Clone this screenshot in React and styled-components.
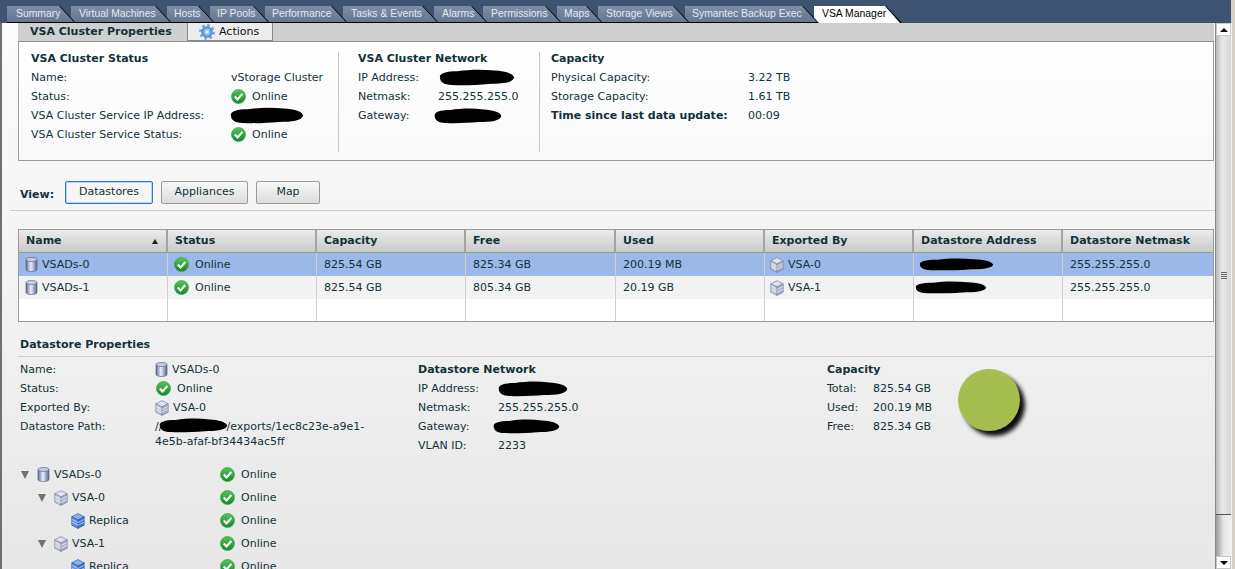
import React from "react";
import styled, { createGlobalStyle } from "styled-components";

const Global = createGlobalStyle`
  html, body { margin: 0; padding: 0; background: #d4d0c8; }
  body { font-family: "DejaVu Sans", Verdana, sans-serif; font-size: 11px; color: #12323a; }
  * { box-sizing: border-box; }
`;

const Page = styled.div`
  width: 1235px; height: 569px; overflow: hidden; display: flex; flex-direction: column; background: #d4d0c8;
`;
const TabBar = styled.div`
  height: 23px; flex: none; display: flex; align-items: flex-end; padding-left: 7px; background: #3d5370; margin-right: 4px;
`;
const Tab = styled.div`
  position: relative; height: 17px; width: ${p => p.$w + 5}px; margin-right: -5px; z-index: ${p => p.$z};
  padding-left: ${p => p.$pad}px; line-height: 16px; white-space: nowrap;
  font-family: "Liberation Sans", Arial, sans-serif; font-size: 10.4px;
  color: ${p => (p.$active ? "#000" : "#e4e8ee")};
  background: #000;
  clip-path: polygon(0 100%, 0 0, calc(100% - 16px) 0, 100% 100%);
  &::before {
    content: ""; position: absolute; inset: 0 0 ${p => (p.$active ? 0 : 1)}px 0; z-index: -1;
    background: ${p => (p.$active ? "#fff" : "linear-gradient(#7d8da6, #66768f)")};
    clip-path: polygon(0 100%, 0 0, calc(100% - 17px) 0, calc(100% - 2px) 100%);
  }
`;
const Body = styled.div`flex: 1; min-height: 0; display: flex;`;
const Edge = styled.div`width: 2px; flex: none; background: #6f6f6f;`;
const Main = styled.div`
  width: 1213px; flex: none; overflow: hidden; background: linear-gradient(#fafafa, #f6f6f6 32%, #e7e7e7);
`;
const ClusterBox = styled.section`margin: 0 1px 0 16px;`;
const ClusterHeader = styled.div`
  height: 19px; display: flex; background: #cfcfcf; border-bottom: 1px solid #8f8f8f; padding-left: 12px;
`;
const HeaderTitle = styled.h2`
  margin: 0; width: 157px; font-size: 11px; font-weight: 700; line-height: 17px; color: #12323a;
`;
const ActionButton = styled.button`
  width: 86px; height: 18px; padding: 0 0 0 11px; display: flex; align-items: center; gap: 4px; font: inherit; color: #111;
  background: #ececec; border: 1px solid #8a8a8a; border-top: 0; border-left-width: 1px;
`;
const ClusterPanel = styled.div`
  height: 119px; display: flex; padding: 7px 0 0 12px; border: 1px solid #9a9a9a; border-top: 0;
  background: linear-gradient(#fff, #f8f8f8);
`;
const InfoColumn = styled.div`width: ${p => p.$w}px; flex: none;`;
const Divider = styled.div`width: 1px; height: 100px; margin: 3px ${p => p.$gap}px 0 0; background: #c4c8c8; flex: none;`;
const Row = styled.div`
  height: 19px; display: flex; align-items: center; white-space: nowrap;
`;
const Label = styled.span`width: ${p => p.$w}px; flex: none; font-weight: ${p => (p.$bold ? 700 : 400)};`;
const ColTitle = styled.div`height: 19px; line-height: 19px; font-weight: 700; white-space: nowrap;`;
const Value = styled.span`display: inline-flex; align-items: center; gap: ${p => p.$gap ?? 4}px;`;
const Mark = styled.svg`
  display: block; flex: none; width: ${p => p.$w}px; height: ${p => p.$h}px; margin-left: ${p => p.$x ?? 0}px;
`;
const InlineMark = styled(Mark)`display: inline-block; vertical-align: middle; margin: -4px 0 0 -4px;`;

const ViewRow = styled.div`
  margin-top: 20px; height: 30px; padding: 0 0 7px 18px; display: flex; align-items: flex-start; border-bottom: 1px solid #c9d0cd; margin-left: 8px; padding-left: 10px;
`;
const ViewLabel = styled.span`width: 45px; font-weight: 700; line-height: 27px;`;
const ViewButton = styled.button`
  width: ${p => p.$w}px; height: 23px; margin-right: 8px; padding: 0 0 2px; font: inherit; color: #12323a; border-radius: 2px;
  background: linear-gradient(#f8f8f8, #dcdcdc);
  border: 1px solid ${p => (p.$on ? "#2f73d8" : "#9a9a9a")};
  box-shadow: ${p => (p.$on ? "inset 0 0 0 1px #b9d2f5" : "none")};
  ${p => (p.$on ? "background: #f6f6f6;" : "")}
`;

const Table = styled.div`
  margin: 18px 1px 0 16px; width: 1196px; border: 1px solid #9a9a9a; border-top-width: 1px; background: #fff;
`;
const GridRow = styled.div`
  display: grid; grid-template-columns: 149px 149px 149px 150px 149px 149px 149px 150px;
  height: ${p => p.$h ?? 23}px; background: ${p => p.$bg};
  ${p => (p.$head ? "border-bottom: 1px solid #9a9a9a;" : "")}
`;
const HeadCell = styled.div`
  padding-left: 7px; line-height: 21px; font-weight: 700; color: #12323a; border-right: 2px solid #a4a4a4; position: relative;
  background: linear-gradient(#ebebeb, #c9c9c9);
  &:last-child { border-right: 0; }
`;
const SortArrow = styled.span`
  position: absolute; right: 8px; top: 9px; width: 0; height: 0;
  border: 3px solid transparent; border-top: 0; border-bottom: 5px solid #222;
`;
const Cell = styled.div`
  display: flex; align-items: center; gap: ${p => p.$gap ?? 4}px; padding-left: ${p => p.$pad ?? 7}px; white-space: nowrap; border-right: 1px solid #cfcfcf; color: ${p => p.$c ?? "#12323a"};
  &:last-child { border-right: 0; }
`;

const DetailTitle = styled.h3`
  margin: 14px 1px 0 16px; padding: 0 0 4px 2px; height: 21px; font-size: 11px; line-height: 17px; font-weight: 700; color: #12323a; border-bottom: 1px solid #d0d0d0;
`;
const Details = styled.div`display: flex; height: 106px; padding: 3px 0 0 18px;`;
const DetailCol = styled.div`width: ${p => p.$w}px; flex: none;`;
const PathRow = styled.div`display: flex; line-height: 15px; padding-top: 2px;`;
const PathText = styled.div`width: 235px;`;
const Gauge = styled.div`
  width: 62px; height: 62px; margin-top: 9px; border-radius: 50%; background: #a6bd50; box-shadow: 5px 5px 4px rgba(0,0,0,.95); flex: none;
`;
const Tree = styled.div`padding-left: 19px;`;
const TreeRow = styled.div`height: 23px; display: flex; align-items: center;`;
const TreeName = styled.div`
  width: 199px; flex: none; display: flex; align-items: center; gap: 4px; padding-left: ${p => p.$i * 17}px;
`;
const Caret = styled.span`
  width: 0; height: 0; flex: none; margin-right: 4px; margin-left: ${p => (p.$hidden ? 0 : 0)}px; border: 4.5px solid transparent; border-bottom: 0; border-top: 8px solid #6a7470; visibility: ${p => (p.$hidden ? "hidden" : "visible")};
`;

const Scroll = styled.div`
  width: 16px; flex: none; display: flex; flex-direction: column; border-left: 1px solid #8a8a8a; background: #e6e6e6;
`;
const ScrollBtn = styled.div`
  height: 13px; flex: none; display: flex; align-items: center; justify-content: center; background: #fff; border: 1px solid #c8c8c8;
`;
const ArrowUp = styled.span`width: 0; height: 0; border: 4px solid transparent; border-top: 0; border-bottom: 4px solid #000;`;
const ArrowDown = styled.span`width: 0; height: 0; border: 4px solid transparent; border-bottom: 0; border-top: 4px solid #000;`;
const Thumb = styled.div`
  flex: 1; display: flex; flex-direction: column; justify-content: center; align-items: center; gap: 1px; border-bottom: 1px solid #555; border-top: 1px solid transparent;
  background: linear-gradient(90deg, #b8b8b8, #e8e8e8 40%, #d8d8d8);
`;
const Grip = styled.span`width: 6px; height: 1px; background: #666;`;
const Track = styled.div`height: 41px; flex: none; background: linear-gradient(90deg, #9a9a9a, #e6e6e6 50%, #f0f0f0);`;
const Side = styled.div`flex: 1; background: #d4d0c8; border-left: 1px solid #f4f2ee;`;

const Check = () => (
  <svg width="15" height="15" viewBox="0 0 15 15" style={{ flex: "none", display: "block" }}>
    <defs>
      <linearGradient id="okg" x1="0" y1="0" x2="0" y2="1">
        <stop offset="0" stopColor="#56c45e" />
        <stop offset="1" stopColor="#15882c" />
      </linearGradient>
    </defs>
    <circle cx="7.5" cy="7.5" r="7" fill="url(#okg)" stroke="#2a9a3e" strokeWidth=".6" />
    <path d="M3.8 7.6l2.7 2.8 4.8-5.4" fill="none" stroke="#fff" strokeWidth="2.1" />
  </svg>
);
const Cyl = () => (
  <svg width="13" height="15" viewBox="0 0 13 15" style={{ flex: "none", display: "block" }}>
    <defs>
      <linearGradient id="cyg" x1="0" y1="0" x2="1" y2="0">
        <stop offset="0" stopColor="#4b5a8c" />
        <stop offset=".35" stopColor="#eef0f6" />
        <stop offset=".65" stopColor="#c3c9da" />
        <stop offset="1" stopColor="#4b5a8c" />
      </linearGradient>
    </defs>
    <path d="M1 2.5v10c0 1 2.4 2 5.5 2s5.5-1 5.5-2v-10z" fill="url(#cyg)" stroke="#59668f" strokeWidth=".7" />
    <ellipse cx="6.5" cy="2.5" rx="5.5" ry="2" fill="#c9cede" stroke="#59668f" strokeWidth=".7" />
    <path d="M4 4.5v9.5M9 4.5v9.5" stroke="#8d97b6" strokeWidth=".7" />
  </svg>
);
const Cube = ({ blue }) => {
  const s = blue ? "#2f5fb5" : "#7a83a6";
  const top = blue ? "#8fb2ea" : "#dfe2ec";
  const l = blue ? "#5f8fdc" : "#c6cadb";
  const r = blue ? "#3f70c8" : "#a9afc8";
  return (
    <svg width="14" height="16" viewBox="0 0 14 16" style={{ flex: "none", display: "block" }}>
      <path d="M7 .6l6.2 3.2L7 7 .8 3.8z" fill={top} stroke={s} strokeWidth=".7" />
      <path d="M.8 3.8L7 7v8.4L.8 12.2z" fill={l} stroke={s} strokeWidth=".7" />
      <path d="M13.2 3.8L7 7v8.4l6.2-3.2z" fill={r} stroke={s} strokeWidth=".7" />
      <path d="M1 6.5l6 3 6-3M1 9.2l6 3 6-3" fill="none" stroke={blue ? "#dbe6f8" : "#f2f3f7"} strokeWidth=".7" />
    </svg>
  );
};
const Gear = () => (
  <svg width="16" height="16" viewBox="0 0 16 16" style={{ flex: "none", display: "block" }}>
    <circle cx="8" cy="8" r="6.6" fill="none" stroke="#6ea6ea" strokeWidth="2.6" strokeDasharray="2.6 2.58" />
    <circle cx="8" cy="8" r="4.6" fill="none" stroke="#4b8fe0" strokeWidth="2.4" />
    <circle cx="8" cy="8" r="2.6" fill="#dfe8f2" stroke="#2f6bbd" strokeWidth=".6" />
  </svg>
);
const blobD = "M2 8C1 4 8 2 20 2 32 .5 44 0 58 1.5 68 2 77 4 78 8 77 13 66 14 52 14 40 15 26 15.5 14 15 6 15 2 12 2 8z";
const Blob = ({ w, h, x }) => (
  <Mark $w={w} $h={h} $x={x} viewBox="0 0 80 16" preserveAspectRatio="none"><path d={blobD} fill="#000" /></Mark>
);

const Online = ({ gap = 6 }) => (
  <Value $gap={gap}><Check />Online</Value>
);

const tabs = [
  ["Summary", 64, 9], ["Virtual Machines", 96, 8], ["Hosts", 43, 7], ["IP Pools", 55, 7], ["Performance", 78, 7],
  ["Tasks & Events", 91, 8], ["Alarms", 49, 8], ["Permissions", 74, 8], ["Maps", 41, 7], ["Storage Views", 87, 8],
  ["Symantec Backup Exec", 129, 7], ["VSA Manager", 83, 8],
];
const cols = ["Name", "Status", "Capacity", "Free", "Used", "Exported By", "Datastore Address", "Datastore Netmask"];
const rows = [
  { name: "VSADs-0", free: "825.34 GB", used: "200.19 MB", by: "VSA-0", bg: "#9ab8e8", blob: [77, 13, -3] },
  { name: "VSADs-1", free: "805.34 GB", used: "20.19 GB", by: "VSA-1", bg: "#f2f2f2", blob: [74, 13, -7] },
];
const tree = [
  { i: 0, kind: "cyl", name: "VSADs-0" },
  { i: 1, kind: "cube", name: "VSA-0" },
  { i: 2, kind: "rep", name: "Replica" },
  { i: 1, kind: "cube", name: "VSA-1" },
  { i: 2, kind: "rep", name: "Replica" },
];

export default function App() {
  return (
    <Page>
      <Global />
      <TabBar>
        {tabs.map(([t, w, pad], i) => (
          <Tab key={t} $w={i === 11 ? 83 : w} $pad={pad} $z={20 - i} $active={i === 11}>{t}</Tab>
        ))}
      </TabBar>
      <Body>
        <Edge />
        <Main>
          <ClusterBox>
            <ClusterHeader>
              <HeaderTitle>VSA Cluster Properties</HeaderTitle>
              <ActionButton><Gear />Actions</ActionButton>
            </ClusterHeader>
            <ClusterPanel>
              <InfoColumn $w={307}>
                <ColTitle>VSA Cluster Status</ColTitle>
                <Row><Label $w={200}>Name:</Label>vStorage Cluster</Row>
                <Row><Label $w={200}>Status:</Label><Online /></Row>
                <Row><Label $w={200}>VSA Cluster Service IP Address:</Label><Blob w={76} h={17} x={-2} /></Row>
                <Row><Label $w={200}>VSA Cluster Service Status:</Label><Online /></Row>
              </InfoColumn>
              <Divider $gap={19} />
              <InfoColumn $w={181}>
                <ColTitle>VSA Cluster Network</ColTitle>
                <Row><Label $w={80}>IP Address:</Label><Blob w={78} h={17} /></Row>
                <Row><Label $w={80}>Netmask:</Label>255.255.255.0</Row>
                <Row><Label $w={80}>Gateway:</Label><Blob w={70} h={16} x={-5} /></Row>
              </InfoColumn>
              <Divider $gap={11} />
              <InfoColumn $w={300}>
                <ColTitle>Capacity</ColTitle>
                <Row><Label $w={197}>Physical Capacity:</Label>3.22 TB</Row>
                <Row><Label $w={197}>Storage Capacity:</Label>1.61 TB</Row>
                <Row><Label $w={197} $bold>Time since last data update:</Label>00:09</Row>
              </InfoColumn>
            </ClusterPanel>
          </ClusterBox>

          <ViewRow>
            <ViewLabel>View:</ViewLabel>
            <ViewButton $w={88} $on>Datastores</ViewButton>
            <ViewButton $w={87}>Appliances</ViewButton>
            <ViewButton $w={64}>Map</ViewButton>
          </ViewRow>

          <Table>
            <GridRow $head $h={23}>
              {cols.map((c, i) => (
                <HeadCell key={c}>{c}{i === 0 && <SortArrow />}</HeadCell>
              ))}
            </GridRow>
            {rows.map(r => (
              <GridRow key={r.name} $bg={r.bg}>
                <Cell $pad={6}><Cyl />{r.name}</Cell>
                <Cell $pad={6} $gap={6}><Check />Online</Cell>
                <Cell>825.54 GB</Cell>
                <Cell>{r.free}</Cell>
                <Cell>{r.used}</Cell>
                <Cell $pad={5}><Cube />{r.by}</Cell>
                <Cell><Blob w={r.blob[0]} h={r.blob[1]} x={r.blob[2]} /></Cell>
                <Cell>255.255.255.0</Cell>
              </GridRow>
            ))}
            <GridRow $bg="#fff" $h={22}>
              {cols.map(c => <Cell key={c} />)}
            </GridRow>
          </Table>

          <DetailTitle>Datastore Properties</DetailTitle>
          <Details>
            <DetailCol $w={398}>
              <Row><Label $w={135}>Name:</Label><Value><Cyl />VSADs-0</Value></Row>
              <Row><Label $w={136}>Status:</Label><Online /></Row>
              <Row><Label $w={135}>Exported By:</Label><Value><Cube />VSA-0</Value></Row>
              <PathRow>
                <Label $w={135}>Datastore Path:</Label>
                <PathText>
                  //<InlineMark $w={71} $h={15} viewBox="0 0 80 16" preserveAspectRatio="none"><path d={blobD} fill="#000" /></InlineMark>
                  <span style={{ marginLeft: -3 }}>/exports/1ec8c23e-a9e1-</span><br />4e5b-afaf-bf34434ac5ff
                </PathText>
              </PathRow>
            </DetailCol>
            <DetailCol $w={409}>
              <ColTitle>Datastore Network</ColTitle>
              <Row><Label $w={80}>IP Address:</Label><Blob w={72} h={16} x={-1} /></Row>
              <Row><Label $w={80}>Netmask:</Label>255.255.255.0</Row>
              <Row><Label $w={80}>Gateway:</Label><Blob w={69} h={15} x={-6} /></Row>
              <Row><Label $w={80}>VLAN ID:</Label>2233</Row>
            </DetailCol>
            <DetailCol $w={131}>
              <ColTitle>Capacity</ColTitle>
              <Row><Label $w={46}>Total:</Label>825.54 GB</Row>
              <Row><Label $w={46}>Used:</Label>200.19 MB</Row>
              <Row><Label $w={46}>Free:</Label>825.34 GB</Row>
            </DetailCol>
            <Gauge />
          </Details>
          <Tree>
            {tree.map((n, idx) => (
              <TreeRow key={idx}>
                <TreeName $i={n.i}>
                  <Caret $hidden={n.kind === "rep"} />
                  {n.kind === "cyl" ? <Cyl /> : <Cube blue={n.kind === "rep"} />}
                  {n.name}
                </TreeName>
                <Online />
              </TreeRow>
            ))}
          </Tree>
        </Main>
        <Scroll>
          <ScrollBtn><ArrowUp /></ScrollBtn>
          <Thumb><Grip /><Grip /><Grip /><Grip /></Thumb>
          <Track />
          <ScrollBtn><ArrowDown /></ScrollBtn>
        </Scroll>
        <Side />
      </Body>
    </Page>
  );
}
